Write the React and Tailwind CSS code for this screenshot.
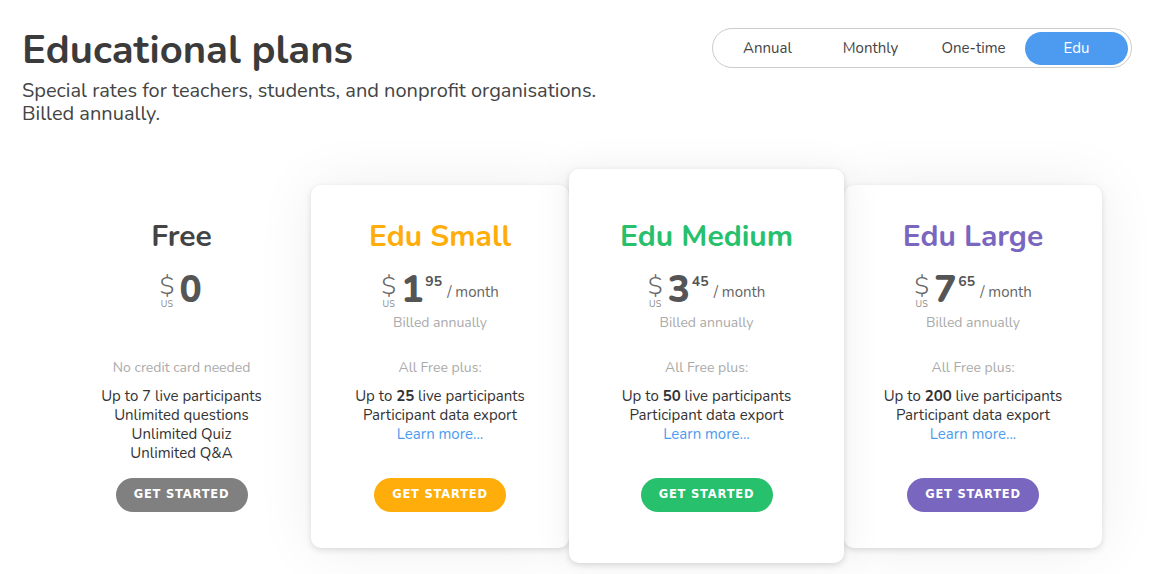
import { useState } from "react";

const PLANS = [
  {
    id: "small",
    name: "Edu Small",
    color: "text-[#ffad0a]",
    btn: "bg-[#ffad0a]",
    dollars: "1",
    cents: "95",
    count: "25",
  },
  {
    id: "medium",
    name: "Edu Medium",
    color: "text-[#27c06c]",
    btn: "bg-[#27c06c]",
    dollars: "3",
    cents: "45",
    count: "50",
  },
  {
    id: "large",
    name: "Edu Large",
    color: "text-[#7966bf]",
    btn: "bg-[#7966bf]",
    dollars: "7",
    cents: "65",
    count: "200",
  },
];

function Price({ dollars, cents, perMonth }) {
  return (
    <div className="flex items-start justify-center h-[44px]">
      <div className="flex flex-col items-center mr-[5px] mt-[7px]">
        <span className="text-[25px] leading-[20px] font-light text-[#666]">$</span>
        <span className="text-[9px] leading-[9px] text-[#888] mt-[4px]">US</span>
      </div>
      <span className="text-[37px] leading-[42px] font-extrabold text-[#555]">{dollars}</span>
      {cents && (
        <span className="text-[14px] leading-[14px] font-bold text-[#555] ml-[2px] mt-[6px]">{cents}</span>
      )}
      {perMonth && (
        <span className="text-[15px] leading-[16px] text-[#666] ml-[5px] mt-[15px]">/ month</span>
      )}
    </div>
  );
}

function Button({ className }) {
  return (
    <button
      className={`h-[34px] w-[132px] rounded-full text-white text-[11.5px] font-bold tracking-[0.07em] ${className}`}
      style={{ fontFamily: '"DejaVu Sans", Verdana, sans-serif' }}
    >
      GET STARTED
    </button>
  );
}

function PlanCard({ plan }) {
  const medium = plan.id === "medium";
  return (
    <div
      className={`bg-white rounded-[10px] flex flex-col items-center ${
        medium
          ? "w-[275px] h-[394px] pt-[48px] z-10 shadow-[0_2px_6px_rgba(0,0,0,0.14),0_0_40px_rgba(0,0,0,0.07)]"
          : "w-[258px] h-[363px] pt-[32px] shadow-[0_2px_6px_rgba(0,0,0,0.13),0_0_60px_rgba(0,0,0,0.07)]"
      }`}
    >
      <div className={`text-[30px] leading-[40px] font-bold ${plan.color}`}>{plan.name}</div>
      <div className="mt-[12px]">
        <Price dollars={plan.dollars} cents={plan.cents} perMonth />
      </div>
      <div className="text-[14px] leading-[18px] text-[#aaa] mt-[1px]">Billed annually</div>
      <div className="text-[14px] leading-[18px] text-[#aaa] mt-[27px]">All Free plus:</div>
      <div className="text-[15px] leading-[19px] text-[#333] text-center mt-[10px]">
        <div>
          Up to <b className="font-bold">{plan.count}</b> live participants
        </div>
        <div>Participant data export</div>
        <div className="text-[#4d9bf0]">Learn more...</div>
      </div>
      <div className="mt-[34px]">
        <Button className={plan.btn} />
      </div>
    </div>
  );
}

export default function App() {
  const [tab, setTab] = useState("Edu");
  const tabs = ["Annual", "Monthly", "One-time", "Edu"];

  return (
    <div
      className="w-[1154px] h-[574px] bg-white overflow-hidden text-[#333]"
      style={{ fontFamily: 'Nunito, Lato, "Noto Sans", sans-serif' }}
    >
      <div className="flex justify-between px-[22px] pt-[28px]">
        <div>
          <h1 className="text-[40px] leading-[44px] font-bold text-[#3b3b3b]">Educational plans</h1>
          <p className="text-[20px] leading-[23px] text-[#444] mt-[7px]">
            Special rates for teachers, students, and nonprofit organisations.
            <br />
            Billed annually.
          </p>
        </div>
        <div className="h-[40px] rounded-full border border-[#ccc] flex items-center px-[3px]">
          {tabs.map((t) => (
            <button
              key={t}
              onClick={() => setTab(t)}
              className={`w-[103px] h-[33px] rounded-full text-[15px] ${
                tab === t ? "bg-[#4d9bf0] text-white" : "text-[#444]"
              }`}
            >
              {t}
            </button>
          ))}
        </div>
      </div>

      <div className="flex items-center pl-[52px] mt-[44px]">
        <div className="w-[259px] h-[363px] flex flex-col items-center pt-[32px]">
          <div className="text-[30px] leading-[40px] font-bold text-[#444]">Free</div>
          <div className="mt-[12px] -ml-[2px]">
            <Price dollars="0" />
          </div>
          <div className="text-[14px] leading-[18px] text-[#aaa] mt-[46px]">No credit card needed</div>
          <div className="text-[15px] leading-[19px] text-[#333] text-center mt-[10px]">
            <div>Up to 7 live participants</div>
            <div>Unlimited questions</div>
            <div>Unlimited Quiz</div>
            <div>Unlimited Q&amp;A</div>
          </div>
          <div className="mt-[15px]">
            <Button className="bg-[#808080]" />
          </div>
        </div>
        {PLANS.map((p) => (
          <PlanCard key={p.id} plan={p} />
        ))}
      </div>
    </div>
  );
}
